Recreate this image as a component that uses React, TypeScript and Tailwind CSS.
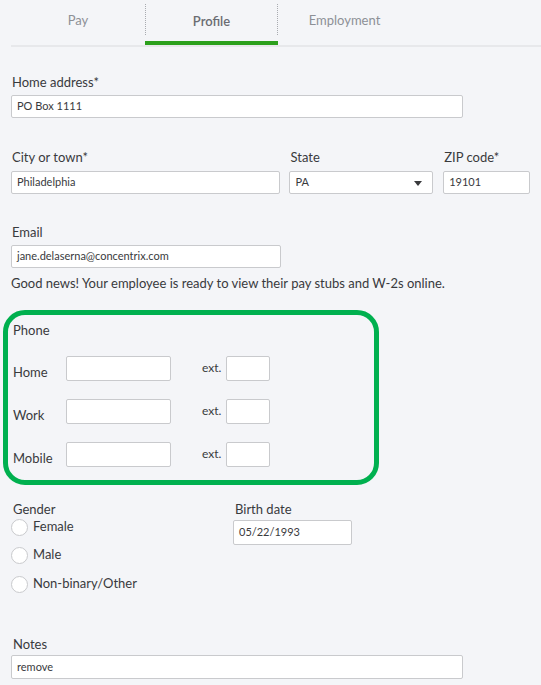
import React from 'react';

const tabs = ['Pay', 'Profile', 'Employment'];

const TextBox: React.FC<{ value?: string; className?: string }> = ({ value = '', className = '' }) => (
  <div
    className={`flex items-center bg-white border border-[#c9cacd] rounded-[2px] px-[5px] text-[11px] text-[#393a3d] ${className}`}
  >
    {value}
  </div>
);

const FieldLabel: React.FC<{ children: React.ReactNode; className?: string }> = ({ children, className = '' }) => (
  <div className={`text-[13px] leading-[16px] text-[#393a3d] ${className}`}>{children}</div>
);

const PhoneRow: React.FC<{ label: string; className?: string }> = ({ label, className = '' }) => (
  <div className={`flex h-[25px] ${className}`}>
    <div className="w-[53px] self-end mb-[1px] text-[13px] leading-[16px] text-[#393a3d]">{label}</div>
    <TextBox className="w-[105px] h-[25px]" />
    <div className="ml-[31px] w-[24px] self-center -mt-[2px] text-[12px] leading-[16px] text-[#393a3d]">ext.</div>
    <TextBox className="w-[44px] h-[25px]" />
  </div>
);

const Radio: React.FC<{ label: string; className?: string }> = ({ label, className = '' }) => (
  <div className={`flex items-center h-[20px] ${className}`}>
    <span className="w-[17px] h-[17px] rounded-full border border-[#c9cacd] bg-white" />
    <span className="ml-[5px] text-[13px] text-[#393a3d]">{label}</span>
  </div>
);

export default function App() {
  return (
    <div className="min-h-[685px] w-[541px] bg-[#f4f5f8] font-['Lato','Liberation_Sans',sans-serif] overflow-hidden">
      {/* Tabs */}
      <div className="flex h-[47px] ml-[11px] border-b-2 border-[#e7e8eb]">
        {tabs.map((t) =>
          t === 'Profile' ? (
            <div key={t} className="w-[133px] flex flex-col">
              <div className="h-[41px] pt-[4px] pb-[6px]">
                <div className="h-full flex items-center justify-center pt-[5px] border-x border-dotted border-[#a9abb0] text-[13px] font-semibold text-[#6b6c72]">
                  {t}
                </div>
              </div>
              <div className="h-[4px] bg-[#2ca01c]" />
            </div>
          ) : (
            <div
              key={t}
              className={`${t === 'Pay' ? 'w-[134px]' : 'w-[133px]'} h-[41px] pt-[1px] flex items-center justify-center text-[13px] text-[#8d9096]`}
            >
              {t}
            </div>
          )
        )}
      </div>

      <div className="px-[11px]">
        {/* Address */}
        <FieldLabel className="mt-[27px] ml-[1px]">Home address*</FieldLabel>
        <TextBox value="PO Box 1111" className="mt-[5px] w-[452px] h-[23px]" />

        <div className="flex mt-[31px]">
          <div className="w-[270px]">
            <FieldLabel className="ml-[1px]">City or town*</FieldLabel>
            <TextBox value="Philadelphia" className="mt-[6px] h-[23px]" />
          </div>
          <div className="w-[144px] ml-[9px]">
            <FieldLabel className="ml-[1px]">State</FieldLabel>
            <div className="mt-[6px] h-[23px] flex items-center justify-between bg-white border border-[#c9cacd] rounded-[2px] pl-[5px] pr-[10px] text-[11px] text-[#393a3d]">
              <span>PA</span>
              <svg width="8" height="5" viewBox="0 0 8 5" className="mt-[2px]">
                <path d="M0 0h8L4 5z" fill="#393a3d" />
              </svg>
            </div>
          </div>
          <div className="w-[87px] ml-[10px]">
            <FieldLabel className="ml-[1px]">ZIP code*</FieldLabel>
            <TextBox value="19101" className="mt-[6px] h-[23px]" />
          </div>
        </div>

        {/* Email */}
        <FieldLabel className="mt-[30px] ml-[1px]">Email</FieldLabel>
        <TextBox value="jane.delaserna@concentrix.com" className="mt-[5px] w-[270px] h-[23px]" />
        <p className="mt-[7px] text-[13px] leading-[16px] text-[#393a3d]">
          Good news! Your employee is ready to view their pay stubs and W-2s online.
        </p>

        {/* Phone numbers */}
        <div className="mt-[19px] -ml-[8px] w-[376px] h-[175px] border-[5px] border-[#00b04f] rounded-[22px] pl-[5px] pt-[7px]">
          <FieldLabel>Phone</FieldLabel>
          <PhoneRow label="Home" className="mt-[18px]" />
          <PhoneRow label="Work" className="mt-[18px]" />
          <PhoneRow label="Mobile" className="mt-[18px]" />
        </div>

        {/* Gender and birth date */}
        <div className="flex mt-[16px]">
          <div className="w-[222px]">
            <FieldLabel className="ml-[2px]">Gender</FieldLabel>
            <Radio label="Female" />
            <Radio label="Male" className="mt-[8px]" />
            <Radio label="Non-binary/Other" className="mt-[9px]" />
          </div>
          <div>
            <FieldLabel className="ml-[2px]">Birth date</FieldLabel>
            <TextBox value="05/22/1993" className="mt-[3px] w-[119px] h-[25px]" />
          </div>
        </div>

        {/* Notes */}
        <FieldLabel className="mt-[42px] ml-[2px]">Notes</FieldLabel>
        <TextBox value="remove" className="mt-[3px] w-[452px] h-[24px]" />
      </div>
    </div>
  );
}
